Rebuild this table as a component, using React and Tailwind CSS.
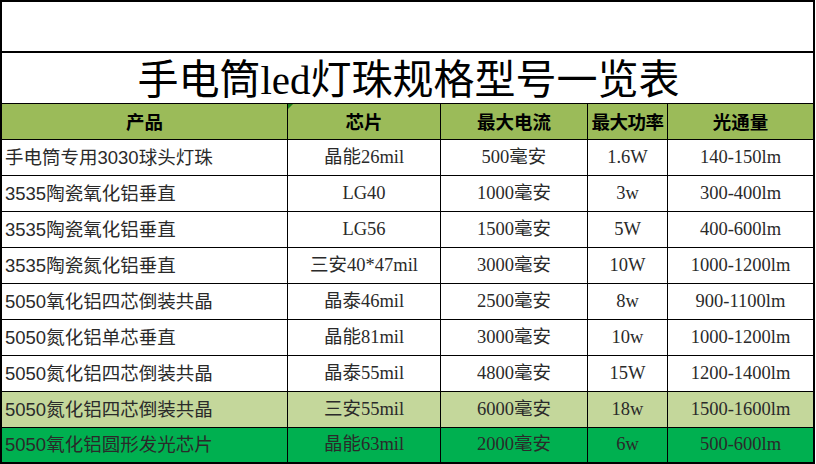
import React from "react";

const rows = [
  ["手电筒专用3030球头灯珠", "晶能26mil", "500毫安", "1.6W", "140-150lm", ""],
  ["3535陶瓷氧化铝垂直", "LG40", "1000毫安", "3w", "300-400lm", ""],
  ["3535陶瓷氧化铝垂直", "LG56", "1500毫安", "5W", "400-600lm", ""],
  ["3535陶瓷氮化铝垂直", "三安40*47mil", "3000毫安", "10W", "1000-1200lm", ""],
  ["5050氧化铝四芯倒装共晶", "晶泰46mil", "2500毫安", "8w", "900-1100lm", ""],
  ["5050氮化铝单芯垂直", "晶能81mil", "3000毫安", "10w", "1000-1200lm", ""],
  ["5050氮化铝四芯倒装共晶", "晶泰55mil", "4800毫安", "15W", "1200-1400lm", ""],
  ["5050氮化铝四芯倒装共晶", "三安55mil", "6000毫安", "18w", "1500-1600lm", "light"],
  ["5050氧化铝圆形发光芯片", "晶能63mil", "2000毫安", "6w", "500-600lm", "green"],
];

const sans = "font-['Liberation_Sans','Noto_Sans_CJK_SC',sans-serif]";
const serif = "font-['Liberation_Serif','Noto_Sans_CJK_SC',serif]";

function Row({ r, last }) {
  const bg = r[5] === "light" ? "bg-[#c4d79b]" : r[5] === "green" ? "bg-[#00b050]" : "bg-white";
  const h = last ? "h-[34px]" : "h-[36px] border-b border-black";
  return (
    <div className={`flex ${h} ${bg} text-[18.5px] text-[#2a2a2a]`}>
      <div className={`w-[286px] border-r border-black flex items-center pl-[3px] ${sans}`}>{r[0]}</div>
      <div className={`w-[153px] border-r border-black flex items-center justify-center ${serif}`}>{r[1]}</div>
      <div className={`w-[147px] border-r border-black flex items-center justify-center ${serif}`}>{r[2]}</div>
      <div className={`w-[80px] border-r border-black flex items-center justify-center ${serif}`}>{r[3]}</div>
      <div className={`flex-1 flex items-center justify-center ${serif}`}>{r[4]}</div>
    </div>
  );
}

export default function App() {
  return (
    <div className="w-[816px] h-[464px] bg-white overflow-hidden">
      <div className="w-[815px] border-2 border-black flex flex-col">
        <div className="h-[51px] border-b-2 border-black bg-white"></div>
        <div className={`h-[51px] border-b border-black flex items-center justify-center pt-[5px] text-[41px] leading-none text-black ${serif}`}>
          <span className="pl-[2px]">手电筒led灯珠规格型号一览表</span>
        </div>
        <div className="flex h-[36px] border-b border-black bg-[#9bbb59] text-[18.5px] font-bold text-black font-['Noto_Sans_CJK_SC',sans-serif]">
          <div className="w-[286px] border-r border-black flex items-center justify-center">产品</div>
          <div className="relative w-[153px] border-r border-black flex items-center justify-center">
            芯片
            <svg className="absolute left-0 top-0" width="5" height="5" viewBox="0 0 5 5">
              <polygon points="0,0 5,0 0,5" fill="#1a7f1a" />
            </svg>
          </div>
          <div className="w-[147px] border-r border-black flex items-center justify-center">最大电流</div>
          <div className="w-[80px] border-r border-black flex items-center justify-center tracking-[-0.5px]">最大功率</div>
          <div className="flex-1 flex items-center justify-center">光通量</div>
        </div>
        {rows.map((r, i) => (
          <Row key={i} r={r} last={i === rows.length - 1} />
        ))}
      </div>
    </div>
  );
}
